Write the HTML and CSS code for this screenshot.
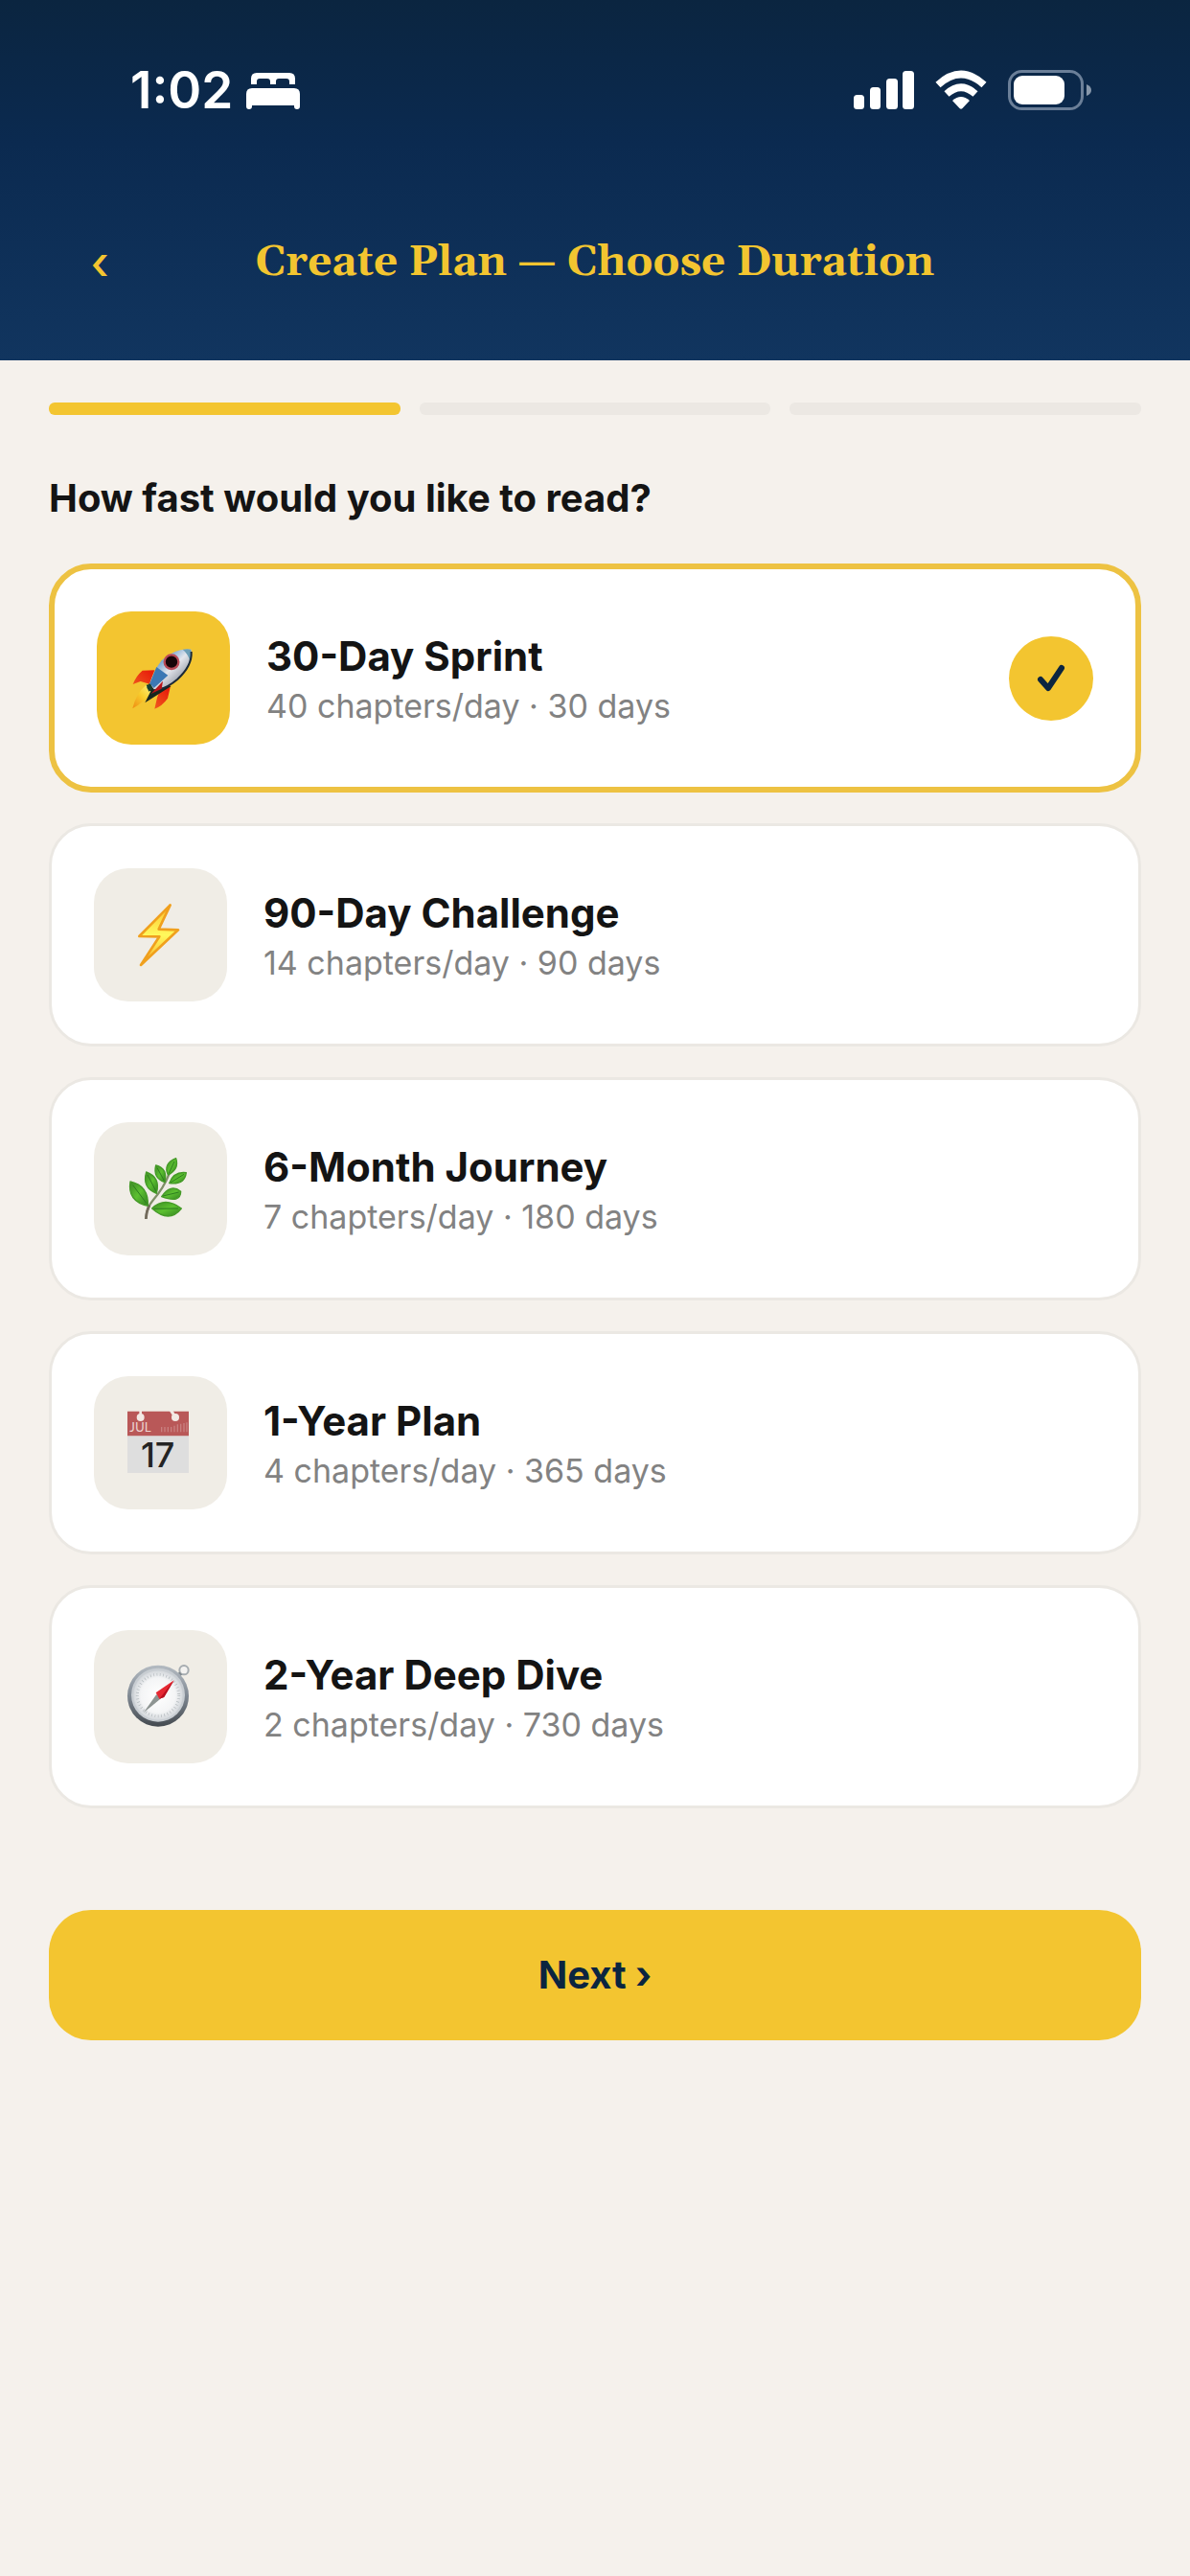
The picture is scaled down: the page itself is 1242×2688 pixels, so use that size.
FILE: index.html
```html
<!DOCTYPE html>
<html lang="en">
<head>
<meta charset="utf-8">
<meta name="viewport" content="width=device-width, initial-scale=1">
<title>Create Plan — Choose Duration</title>
<link rel="stylesheet" href="styles.css">
</head>
<body>
<header class="header">
  <div class="status">
    <div class="status-left">
      <span class="time">1:02</span>
      <svg class="bed" viewBox="0 0 56 40" aria-hidden="true"><path fill="#fff" d="M5 14V8q0-6 6-6h34q6 0 6 6v6h-6v-3q0-3-3-3h-8q-3 0-3 3v3h-6v-3q0-3-3-3h-8q-3 0-3 3v3zM0 24q0-6 6-6h44q6 0 6 6v13q0 3-3 3t-3-3v-1H6v1q0 3-3 3t-3-3z"/></svg>
    </div>
    <div class="status-right">
      <svg class="signal" viewBox="0 0 63 42" aria-hidden="true"><g fill="#fff"><rect y="26" width="11" height="15" rx="3.500"/><rect x="17" y="18" width="11" height="23" rx="3.500"/><rect x="34" y="9" width="12" height="32" rx="3.500"/><rect x="51" y="1" width="12" height="40" rx="3.500"/></g></svg>
      <svg class="wifi" viewBox="0 0 54 42" aria-hidden="true"><g fill="none" stroke="#fff" stroke-width="7.500"><path d="M3 15.500Q27-6.500 51 15.500"/><path d="M12 25Q27 11.500 42 25"/></g><path fill="#fff" d="M18 32q9-8 18 0l-7.500 8q-1.500 1.500-3 0z"/></svg>
      <svg class="battery" viewBox="0 0 88 42" aria-hidden="true"><rect x="1.500" y="1.500" width="76" height="39" rx="13" fill="none" stroke="#6b7f98" stroke-width="3"/><rect x="6" y="6" width="53" height="30" rx="9" fill="#fff"/><path fill="#8797aa" d="M82 15q5 2 5 6t-5 6z"/></svg>
    </div>
  </div>
  <nav class="nav">
    <button class="back" type="button" aria-label="Back">‹</button>
    <h1 class="title">Create Plan — Choose Duration</h1>
  </nav>
</header>
<main class="main">
  <div class="steps" aria-hidden="true">
    <span class="step step-on"></span><span class="step"></span><span class="step"></span>
  </div>
  <form>
    <fieldset class="plans">
      <legend class="question">How fast would you like to read?</legend>
      <label class="plan">
        <input class="plan-input" type="radio" name="plan" checked>
        <svg class="plan-icon" viewBox="35 52 417 417" aria-hidden="true">
          <defs>
            <linearGradient id="hull" x1="0" y1="0" x2="1" y2="1"><stop offset=".2" stop-color="#4f8fc7"/><stop offset=".5" stop-color="#e4e6ec"/><stop offset=".8" stop-color="#8c939e"/><stop offset="1" stop-color="#1d2935"/></linearGradient>
            <linearGradient id="flame" x1="1" y1="0" x2="0" y2="1"><stop offset="0" stop-color="#fff58a"/><stop offset=".5" stop-color="#f8cf2d"/><stop offset="1" stop-color="#ee8a12"/></linearGradient>
            <linearGradient id="fin" x1="1" y1="0" x2="0" y2="1"><stop offset=".3" stop-color="#e8200c"/><stop offset="1" stop-color="#f6802a"/></linearGradient>
          </defs>
          <path fill="url(#flame)" d="M190 282Q158 308 147 356Q180 340 214 296z"/>
          <path fill="url(#fin)" d="M216 236L178 237Q158 254 148 280L172 271L200 279zM232 300L224 322L216 357Q240 348 257 324L266 285z"/>
          <path fill="#16261f" d="M200 276L192 292L204 302L186 338L268 286z"/>
          <path fill="url(#hull)" d="M330 171Q278 166 238 206Q214 236 201 278L214 296Q256 294 290 262Q340 214 330 171z"/>
          <path fill="#3c78b4" d="M222 226L258 252L214 292L201 278z"/>
          <path fill="#6d9fb7" d="M304 171Q320 168 330 171Q334 190 327 207Q320 184 304 171z"/>
          <path fill="none" stroke="#1b2937" stroke-width="6" d="M331 178Q334 222 288 264Q260 288 232 296"/>
          <circle cx="269" cy="210" r="22" fill="#170609" stroke="#b84955" stroke-width="7"/>
          <path fill="#b91419" d="M242 270L205 310L238 294z"/>
          <path fill="#153f30" d="M190 282l14-3 5 16-11 8z"/>
        </svg>
        <span class="plan-text"><span class="plan-name">30-Day Sprint</span><span class="plan-note">40 chapters/day · 30 days</span></span>
        <span class="plan-check"><svg class="tick" viewBox="0 0 30 30" aria-hidden="true"><path d="M4 16l8 9L26 4" fill="none" stroke="#0b2540" stroke-width="6" stroke-linecap="round" stroke-linejoin="round"/></svg></span>
      </label>
      <label class="plan">
        <input class="plan-input" type="radio" name="plan">
        <svg class="plan-icon" viewBox="26 47 417 417" aria-hidden="true">
          <defs><linearGradient id="bolt" x1="0" y1="0" x2="0" y2="1"><stop offset="0" stop-color="#fbc02d"/><stop offset=".5" stop-color="#fff95c"/><stop offset="1" stop-color="#f8b02d"/></linearGradient></defs>
          <path fill="url(#bolt)" stroke="#f0a01e" stroke-width="8" stroke-linejoin="round" d="M265 162L168 260L231 261L173 350L290 240L229 238z"/>
        </svg>
        <span class="plan-text"><span class="plan-name">90-Day Challenge</span><span class="plan-note">14 chapters/day · 90 days</span></span>
      </label>
      <label class="plan">
        <input class="plan-input" type="radio" name="plan">
        <svg class="plan-icon" viewBox="26 47 417 417" aria-hidden="true">
          <defs><linearGradient id="leaf" x1="0" y1="0" x2="1" y2="1"><stop offset="0" stop-color="#3d8a26"/><stop offset=".5" stop-color="#5cc030"/><stop offset="1" stop-color="#318220"/></linearGradient></defs>
          <path fill="none" stroke="#7f8f68" stroke-width="7" d="M189 350Q190 315 212 290Q244 254 262 208"/>
          <path fill="none" stroke="#736a5c" stroke-width="8" d="M189 350Q190 326 200 306"/>
          <g fill="url(#leaf)" stroke="#459a28" stroke-width="4" stroke-linejoin="round">
            <path d="M140 233Q198 246 195 309Q130 294 140 233z"/>
            <path d="M190 203Q236 220 222 270Q176 252 190 203z"/>
            <path d="M220 182Q258 192 248 235Q210 222 220 182z"/>
            <path d="M283 160Q294 194 258 212Q242 176 283 160z"/>
            <path d="M315 205Q310 244 262 238Q276 200 315 205z"/>
            <path d="M238 280Q266 238 298 264Q298 302 238 280z"/>
            <path d="M208 317Q248 278 300 317Q262 365 208 317z"/>
          </g>
          <path fill="none" stroke="#2d7d20" stroke-width="3" d="M148 244L190 300M194 212L220 262M224 190L246 230M278 170L260 208M308 210L266 236M292 266L242 278M290 317L214 318"/>
        </svg>
        <span class="plan-text"><span class="plan-name">6-Month Journey</span><span class="plan-note">7 chapters/day · 180 days</span></span>
      </label>
      <label class="plan">
        <input class="plan-input" type="radio" name="plan">
        <svg class="plan-icon" viewBox="26 47 417 417" aria-hidden="true">
          <path fill="#dedede" d="M131 234h192v116H131z"/>
          <path fill="#b95858" d="M131 157h192v77H131z"/>
          <path fill="none" stroke="#c98080" stroke-width="4" d="M238 206v16M248 206v16M258 206v16M268 206v16M278 202v20M288 198v24M298 196v26M308 194v28M317 192v30"/>
          <g fill="#f3e9e4"><circle cx="172" cy="176" r="12"/><circle cx="281" cy="176" r="12"/><path d="M168 155h8v16h-8zM262 155h12l8 14-8 4z"/></g>
          <text class="cal-month" x="138" y="220">JUL</text>
          <text class="cal-day" x="226" y="331" text-anchor="middle">17</text>
        </svg>
        <span class="plan-text"><span class="plan-name">1-Year Plan</span><span class="plan-note">4 chapters/day · 365 days</span></span>
      </label>
      <label class="plan">
        <input class="plan-input" type="radio" name="plan">
        <svg class="plan-icon" viewBox="26 47 417 417" aria-hidden="true">
          <defs>
            <linearGradient id="rim" x1="0" y1="0" x2="0" y2="1"><stop offset="0" stop-color="#b4bbc2"/><stop offset=".5" stop-color="#808993"/><stop offset="1" stop-color="#43494f"/></linearGradient>
            <radialGradient id="dial"><stop offset="0" stop-color="#fff"/><stop offset=".7" stop-color="#f4f5f6"/><stop offset="1" stop-color="#d4d8dc"/></radialGradient>
          </defs>
          <circle cx="308" cy="172" r="14" fill="#f3f2f0" stroke="#a6acb0" stroke-width="6"/>
          <path stroke="#7f878d" stroke-width="12" d="M290 190l8-8"/>
          <circle cx="227" cy="253" r="96" fill="url(#rim)"/>
          <circle cx="227" cy="250" r="84" fill="#c8cdd2"/>
          <circle cx="227" cy="251" r="77" fill="url(#dial)"/>
          <circle cx="227" cy="251" r="65" fill="none" stroke="#b3b9bd" stroke-width="9" stroke-dasharray="2 8"/>
          <path fill="#8d9492" d="M222 248L236 261L181 306z"/>
          <path fill="#e52832" d="M277 204L220 243L231 262L245 257z"/>
          <path fill="#b9101f" d="M277 204L231 262L246 257z"/>
        </svg>
        <span class="plan-text"><span class="plan-name">2-Year Deep Dive</span><span class="plan-note">2 chapters/day · 730 days</span></span>
      </label>
    </fieldset>
    <button class="next" type="submit">Next ›</button>
  </form>
</main>
</body>
</html>
```
FILE: styles.css
```css
* { box-sizing: border-box; }

body {
  margin: 0;
  min-height: 100vh;
  background: #f5f1ec;
  color: #141414;
  font-family: Inter, "Liberation Sans", sans-serif;
}

.header {
  background: linear-gradient(#0b2540, #0b2a50 40%, #11355f);
  padding-bottom: 58px;
}

.status {
  display: flex;
  justify-content: space-between;
  align-items: center;
  padding: 62px 102px 0 136px;
}

.status-left { display: flex; align-items: center; gap: 14px; }
.status-right { display: flex; align-items: center; gap: 22px; }

.time {
  color: #fff;
  font-size: 53px;
  line-height: 64px;
  font-weight: 600;
}

.bed { width: 56px; height: 40px; }
.signal { width: 63px; height: 42px; }
.wifi { width: 54px; height: 42px; }
.battery { width: 88px; height: 42px; }

.nav {
  display: grid;
  grid-template-columns: 80px 1fr 80px;
  align-items: center;
  margin-top: 104px;
  padding: 0 64px;
}

.back {
  height: 88px;
  padding: 0;
  border: 0;
  background: none;
  color: #f3c530;
  font: 500 48px/88px Inter, sans-serif;
}

.title {
  margin: 0;
  text-align: center;
  color: #f3c530;
  font: 700 44px/64px Gelasio, Georgia, "Liberation Serif", serif;
}

.main { padding: 44px 51px; }

.steps { display: grid; grid-template-columns: repeat(3, 1fr); gap: 20px; }
.step { height: 13px; border-radius: 6px; background: #ece8e3; }
.step-on { background: #f3c530; }

.plans {
  display: flex;
  flex-direction: column;
  gap: 32px;
  margin: 0;
  padding: 0;
  border: 0;
  min-width: 0;
}

.question {
  padding: 63px 0 44px;
  font-size: 40px;
  line-height: 48px;
  font-weight: 700;
}

.plan {
  display: flex;
  align-items: center;
  gap: 38px;
  padding: 44px;
  border: 3px solid #ebe8e3;
  border-radius: 44px;
  background: #fff;
}

.plan:has(:checked) { border: 6px solid #edc242; }

.plan-input { position: absolute; opacity: 0; }

.plan-icon {
  flex: none;
  width: 139px;
  height: 139px;
  border-radius: 36px;
  background: #f0ede6;
}

.plan:has(:checked) .plan-icon { background: #f3c530; }

.plan-text { flex: 1; display: flex; flex-direction: column; padding-top: 6px; }

.plan-name { font-size: 42px; line-height: 52px; font-weight: 700; }
.plan-note { font-size: 34px; line-height: 52px; color: #828282; }

.plan-check {
  display: grid;
  place-items: center;
  width: 88px;
  height: 88px;
  border-radius: 50%;
  background: #f3c530;
}

.tick { width: 30px; height: 30px; }

.cal-month { font: 400 40px Lato, sans-serif; fill: #ecd3d0; }
.cal-day { font: 500 108px Inter, sans-serif; fill: #242424; }

.next {
  display: block;
  width: 100%;
  margin-top: 106px;
  padding: 44px;
  border: 0;
  border-radius: 44px;
  background: #f3c530;
  color: #0b2540;
  font: 700 40px/48px Inter, sans-serif;
}
```
